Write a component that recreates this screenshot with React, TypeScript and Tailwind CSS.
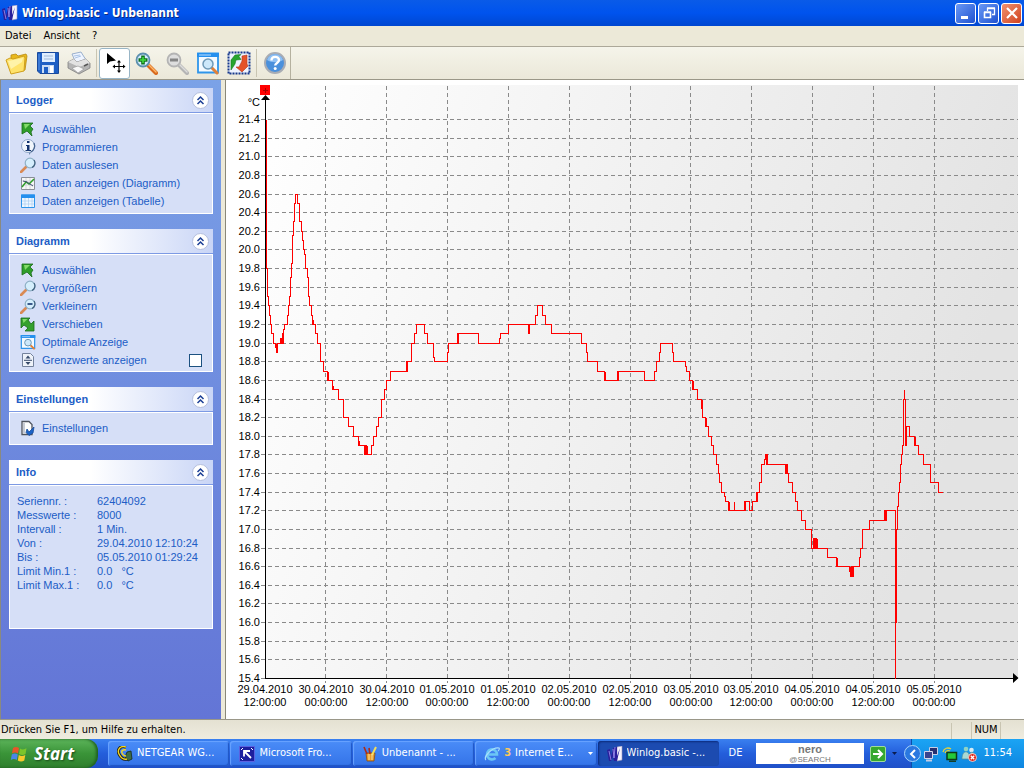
import type { ReactNode } from "react";

type IconProps = { className?: string };

/* ---------- icons ---------- */

function WinlogIcon() {
  return (
    <svg className="h-4 w-4 shrink-0" viewBox="0 0 16 16">
      <path d="M10 1l5-1v14l-5 1z" fill="#f6f4ff" stroke="#9a96b8" strokeWidth=".6" />
      <path d="M0 4l3-1 1 8 2-9 4-1v9l3-8-3 13H7l-1-5-2 5H2z" fill="#2a1f9c" />
      <path d="M2 5l2 9M6 3l1 9M8 1L7 12" stroke="#b4a8ff" strokeWidth=".7" />
    </svg>
  );
}

function FolderIcon() {
  return (
    <svg className="h-6 w-6" viewBox="0 0 24 24">
      <path d="M6 4l5-1 2 2 8-2 1 2-2 14-14 2z" fill="#e9b91c" stroke="#b98a10" strokeWidth=".8" />
      <path d="M1 9l4-2 3 1 11-3 1 2-1 13-13 3z" fill="#ffe36a" stroke="#cf9f1c" />
      <path d="M3 10l5-1 10-2-1 4L6 18z" fill="#fff6b8" opacity=".8" />
    </svg>
  );
}

function SaveIcon() {
  return (
    <svg className="h-6 w-6" viewBox="0 0 24 24">
      <path d="M1.500 1.500h21v21H4l-2.500-2.500z" fill="#1e5fc4" stroke="#1a4a9c" />
      <path d="M6 2h13v9H6z" fill="#dfeeff" />
      <path d="M8 5h9M8 8h9" stroke="#9fb8d8" />
      <path d="M6 14h12v8H6z" fill="#c9dcf5" />
      <path d="M8 16h4v6H8z" fill="#1e5fc4" />
      <path d="M14 15h3v7h-3z" fill="#fff" />
      <path d="M3 3v16" stroke="#5a96e8" />
    </svg>
  );
}

function PrinterIcon() {
  return (
    <svg className="h-6 w-6" viewBox="0 0 24 24">
      <path d="M5 3l9-2 5 8-10 3z" fill="#eef4ff" stroke="#9bb0cc" />
      <path d="M7 5l6-1M8 7l6-2" stroke="#a9c3e6" />
      <path d="M1 11l6-3 3 3 9-3 4 4v5l-11 6-11-6z" fill="#b4b4b4" stroke="#808080" strokeWidth=".8" />
      <path d="M1 11l11 5 11-4-4-4-9 3-3-3z" fill="#e2e2e2" />
      <path d="M5 17l6-2 6 3-6 4z" fill="#f8f8f8" stroke="#9a9a9a" strokeWidth=".7" />
      <path d="M17 15l4-2" stroke="#555" strokeWidth="1.500" />
    </svg>
  );
}

function CursorMoveIcon() {
  return (
    <svg className="h-6 w-6" viewBox="0 0 24 24">
      <path d="M4 2v11l3-2.500 6-1z" fill="#000" />
      <path d="M16 10v11M10.500 15.500h11" stroke="#000" strokeWidth="1.200" />
      <path d="M16 9l-2 2.500h4zM16 22l-2-2.500h4zM9.500 15.500l2.500-2v4zM22.500 15.500l-2.500-2v4z" fill="#000" />
    </svg>
  );
}

function ZoomIcon({ sign, muted }: { sign: "plus" | "minus"; muted?: boolean }) {
  return (
    <svg className="h-6 w-6" viewBox="0 0 24 24">
      <path d="M14 14l8 8" stroke={muted ? "#b4b4b4" : "#d86a1e"} strokeWidth="4" strokeLinecap="round" />
      <path d="M14 13l8 8" stroke={muted ? "#dcdcdc" : "#ffb868"} strokeWidth="1.500" strokeLinecap="round" />
      <circle cx="9" cy="9" r="6.500" fill={muted ? "#dedede" : "#d3ebff"} stroke={muted ? "#b4b4b4" : "#5c8fae"} strokeWidth="1.800" />
      {sign === "plus" ? (
        <path d="M9 4.500v9M4.500 9h9" stroke="#10731a" strokeWidth="3.600" />
      ) : (
        <path d="M5 9h8" stroke="#858585" strokeWidth="3" />
      )}
      {sign === "plus" && <path d="M9 6v6M6 9h6" stroke="#3fdb3f" strokeWidth="1.600" />}
    </svg>
  );
}

function ZoomWindowIcon({ className = "h-6 w-6" }: IconProps) {
  return (
    <svg className={className} viewBox="0 0 24 24">
      <path d="M2 2.500h20v19H2z" fill="#f4faff" stroke="#2f95ea" strokeWidth="1.800" />
      <path d="M1 2h22v4H1z" fill="#2590ee" />
      <path d="M3 4h12" stroke="#bfe0ff" />
      <path d="M16 17l5 5" stroke="#e0803a" strokeWidth="3" strokeLinecap="round" />
      <circle cx="12" cy="13" r="5" fill="#cde8fa" stroke="#6f9ab8" strokeWidth="1.500" />
    </svg>
  );
}

function OptimizeIcon() {
  return (
    <svg className="h-6 w-6" viewBox="0 0 24 24">
      <path d="M1.500 1.500h21v21h-21z" fill="#eef3ff" stroke="#17388c" strokeWidth="2" strokeDasharray="2 1" />
      <path d="M4 19V9l4-5 6-.5-2 2 2 3-5 .5-1 4z" fill="#27a52e" stroke="#167a1c" strokeWidth=".6" />
      <path d="M15 5l5-1v9l1 2-6 6-6-5h3l3-6z" fill="#e5532a" stroke="#b6381a" strokeWidth=".6" />
    </svg>
  );
}

function HelpIcon() {
  return (
    <svg className="h-6 w-6" viewBox="0 0 24 24">
      <circle cx="12" cy="12" r="10" fill="#4a90dc" stroke="#a8acb4" strokeWidth="2" />
      <path d="M4 9a8.500 8.500 0 0116 0c-5 3-11 3-16 0z" fill="#8fc0f4" />
      <path d="M8.500 9.500c0-5 7.500-4.500 7.500-.5 0 3-3.800 2.800-3.800 5.500" fill="none" stroke="#fff" strokeWidth="2.400" />
      <circle cx="12.200" cy="17.600" r="1.500" fill="#fff" />
    </svg>
  );
}

function ArrowIcon() {
  return (
    <svg className="h-4 w-4" viewBox="0 0 16 16">
      <path d="M2 2h11l-3 3 3 3-2 3 1 4-5-5-5 3z" fill="#2f9e2a" stroke="#1b6b1a" strokeWidth=".8" />
      <path d="M4 3h6L5 8z" fill="#84dc6a" />
    </svg>
  );
}

function InfoIcon() {
  return (
    <svg className="h-4 w-4" viewBox="0 0 16 16">
      <path d="M9 12l4-1-4 5z" fill="#6c88ab" />
      <circle cx="8" cy="7" r="6.500" fill="#f1f6fc" stroke="#8fa6c6" />
      <path d="M14 4a7 7 0 01-3 9" fill="none" stroke="#47658f" strokeWidth="1.300" />
      <path d="M7 2h2.500v2H7zM6 6h3.500v5H11v1H5.500v-1H7V7H6z" fill="#14346e" />
    </svg>
  );
}

function LensIcon({ minus }: { minus?: boolean }) {
  return (
    <svg className="h-4 w-4" viewBox="0 0 16 16">
      <path d="M6 10l-5 5" stroke="#d98a55" strokeWidth="2.600" strokeLinecap="round" />
      <circle cx="10" cy="6" r="4.800" fill="#d5eefc" stroke="#8fb0c6" strokeWidth="1.200" />
      <path d="M14 3a5 5 0 01-2 7.500" fill="none" stroke="#3f607c" strokeWidth="1.200" />
      {minus && <path d="M7.500 6h5" stroke="#14346e" strokeWidth="1.600" />}
    </svg>
  );
}

function ChartIcon() {
  return (
    <svg className="h-4 w-4" viewBox="0 0 16 16">
      <path d="M1.500 2.500h13v12h-13z" fill="#f7f7f7" stroke="#8a8f98" />
      <path d="M2 6h12M2 10h12M6 3v11M10 3v11" stroke="#c5c9d2" strokeWidth=".7" />
      <path d="M2 12l4-5 3 2 5-5" fill="none" stroke="#2f9e2a" strokeWidth="1.500" />
      <path d="M3 6l4 1 6 4" fill="none" stroke="#3e4e70" />
    </svg>
  );
}

function TableIcon() {
  return (
    <svg className="h-4 w-4" viewBox="0 0 16 16">
      <path d="M1.500 2h13v12.500h-13z" fill="#eff7ff" stroke="#2f95ea" />
      <path d="M1 1.500h14v3.500H1z" fill="#2590ee" />
      <path d="M2 8h12M2 11h12M5 5v9M8.500 5v9M12 5v9" stroke="#a9cdf0" strokeWidth=".7" />
    </svg>
  );
}

function MoveIcon() {
  return (
    <svg className="h-4 w-4" viewBox="0 0 16 16">
      <path d="M1 2h9L8 4l3 4 3-3v10H5l3-3-4-3-3 3z" fill="#35a12e" stroke="#1b6b1a" strokeWidth=".8" />
      <path d="M2.500 3h5l-4 4z" fill="#84dc6a" />
    </svg>
  );
}

function LimitsIcon() {
  return (
    <svg className="h-4 w-4" viewBox="0 0 16 16">
      <path d="M2.500 1.500h8l3 3v10h-11z" fill="#eef2f9" stroke="#74829c" />
      <path d="M8 3.500l2.500 3h-5zM8 13l2.500-3h-5z" fill="#364969" />
      <path d="M4 8.300h8" stroke="#364969" />
    </svg>
  );
}

function SettingsIcon() {
  return (
    <svg className="h-4 w-4" viewBox="0 0 16 16">
      <path d="M2 1.500h7l3 3v10H2z" fill="#fdfdfd" stroke="#50555f" strokeWidth="1.300" />
      <path d="M4 3v10" stroke="#b4bac6" strokeWidth="1.500" />
      <path d="M7 9l2 3 5-5-1 6-4 2.500-3-3z" fill="#1c63c8" stroke="#184a98" strokeWidth=".8" />
    </svg>
  );
}

function WindowsFlag() {
  return (
    <svg className="h-5 w-5" viewBox="0 0 20 20">
      <path d="M3 4c2-1.500 4-1.500 6 0L8 9.500C6 8 4 8 2 9.500z" fill="#e8552a" />
      <path d="M10 4.500c2 1.200 4 1.200 6.500-.2L15.500 10c-2 1.300-4 1.300-6.500 0z" fill="#7cc52b" />
      <path d="M1.800 10.500c2-1.500 4-1.500 6 0l-1 5.500c-2-1.500-4-1.500-6 0z" fill="#4a86e8" />
      <path d="M8.800 11c2 1.200 4 1.200 6.500 0l-1 5.500c-2 1.300-4.500 1.300-6.500 0z" fill="#f8c92c" />
    </svg>
  );
}

function NetgearIcon() {
  return (
    <svg className="h-4 w-4 shrink-0" viewBox="0 0 16 16">
      <path d="M10 6l4-1 1 8-4 2-3-4z" fill="#3d6b45" stroke="#142a18" strokeWidth=".8" />
      <path d="M9 1C3-1 0 4 2 8s5 6 8 5" fill="none" stroke="#1d1d10" strokeWidth="3" />
      <path d="M9 1C3-1 0 4 2 8s5 6 8 5M9 4C6 3 4 5 5 7s3 3 4 3" fill="none" stroke="#f3d523" strokeWidth="1.400" />
    </svg>
  );
}

function FrontpageIcon() {
  return (
    <svg className="h-4 w-4 shrink-0" viewBox="0 0 16 16">
      <path d="M.5.5h15v15H.5z" fill="#1c1f9e" stroke="#5a60e0" />
      <path d="M5 5l7 7M5 10.500V5h6" fill="none" stroke="#fff" strokeWidth="1.800" />
      <path d="M2 12l2 2M12 2l2 2M2 4l2-2" stroke="#fff" />
    </svg>
  );
}

function PaintIcon() {
  return (
    <svg className="h-4 w-4 shrink-0" viewBox="0 0 16 16">
      <path d="M4 7h9l-1 8H5z" fill="#e89a2a" stroke="#8a4c10" strokeWidth=".8" />
      <path d="M5 8L2 1M8 8L7 2" stroke="#b02a14" strokeWidth="1.600" />
      <path d="M10 9l4-8" stroke="#f4de5a" strokeWidth="2" />
      <path d="M7 8v6M10 8v6" stroke="#f8e39a" />
    </svg>
  );
}

function ExplorerIcon() {
  return (
    <svg className="h-4 w-4 shrink-0" viewBox="0 0 16 16">
      <path d="M3.500 8.500H13A5 5 0 1011.500 12" fill="none" stroke="#6cc7f5" strokeWidth="2.600" />
      <path d="M2 14C-1 11 8 1 15 2c.8.600 0 2-1 3" fill="none" stroke="#a9dffc" strokeWidth="1.100" />
    </svg>
  );
}

function MonitorsIcon() {
  return (
    <svg className="h-4 w-4" viewBox="0 0 16 16">
      <path d="M6.500 1.500h8v7h-8z" fill="#26306e" stroke="#c6cde4" />
      <path d="M1.500 5.500h8v7h-8z" fill="#39458e" stroke="#d5daea" />
      <path d="M3 14.500h6" stroke="#c6cde4" strokeWidth="2" />
    </svg>
  );
}

function WirelessIcon() {
  return (
    <svg className="h-4 w-4" viewBox="0 0 16 16">
      <path d="M1 6c1-4 5-5 8-3M3 7c1-2 3-3 5-2" fill="none" stroke="#e8d23a" strokeWidth="1.300" />
      <path d="M5 6.500h9.500v7H5z" fill="#24c93a" stroke="#0c3b18" strokeWidth="1.500" />
      <path d="M7 15.200h7" stroke="#173c1e" strokeWidth="1.500" />
    </svg>
  );
}

function MessengerIcon() {
  return (
    <svg className="h-4 w-4" viewBox="0 0 16 16">
      <circle cx="5" cy="3" r="2.300" fill="#8fd3c4" />
      <circle cx="10.500" cy="4" r="2.300" fill="#d8ecf5" />
      <path d="M1 13c0-10 8-9 8 0zM8 12c0-8 6-7 6-1z" fill="#a9d9d4" stroke="#4c8c9a" strokeWidth=".7" />
      <circle cx="11.500" cy="11.500" r="4" fill="#e02a1c" stroke="#fff" strokeWidth=".7" />
      <path d="M9.800 9.800l3.400 3.400M13.200 9.800l-3.400 3.400" stroke="#fff" strokeWidth="1.300" />
    </svg>
  );
}

/* ---------- window chrome ---------- */

function TitleBar() {
  const button = "flex h-[21px] w-[21px] items-center justify-center rounded-[3px] border border-white";
  return (
    <header className="flex h-[26px] items-center gap-1 bg-linear-to-b from-[#0a5be8] via-[#0053ee] to-[#0047d0] px-0.5">
      <WinlogIcon />
      <h1 className="flex-1 font-['DejaVu_Sans_Condensed','Liberation_Sans',sans-serif] text-[12px] font-bold text-white [text-shadow:1px_1px_#0a2a80]">
        Winlog.basic - Unbenannt
      </h1>
      <div className="flex gap-0.5">
        <button aria-label="Minimieren" className={`${button} bg-linear-to-br from-[#6a98f5] to-[#1f50d0]`}>
          <svg className="h-4 w-4" viewBox="0 0 16 16"><path d="M3 11h7v3H3z" fill="#fff" /></svg>
        </button>
        <button aria-label="Wiederherstellen" className={`${button} bg-linear-to-br from-[#6a98f5] to-[#1f50d0]`}>
          <svg className="h-4 w-4" viewBox="0 0 16 16">
            <path d="M6.500 6V3.500h7v6H11M6 3h8" fill="none" stroke="#fff" strokeWidth="1.300" />
            <path d="M3.500 7.500h6v5h-6zM3 7h7" fill="none" stroke="#fff" strokeWidth="1.600" />
          </svg>
        </button>
        <button aria-label="Schließen" className={`${button} bg-linear-to-br from-[#f0906e] to-[#d0401a]`}>
          <svg className="h-4 w-4" viewBox="0 0 16 16"><path d="M3 3l10 10M13 3L3 13" stroke="#fff" strokeWidth="2.200" /></svg>
        </button>
      </div>
    </header>
  );
}

function ToolButton({ label, active, children }: { label: string; active?: boolean; children: ReactNode }) {
  return (
    <button
      aria-label={label}
      className={`flex h-[31px] w-[31px] items-center justify-center ${active ? "rounded-[3px] border border-[#98b5c6] bg-white" : ""}`}
    >
      {children}
    </button>
  );
}

function Separator() {
  return <div className="mx-0.5 h-7 w-px bg-[#c9c5b2]" />;
}

function Toolbar() {
  return (
    <div className="flex h-[34px] items-center border-t border-b border-t-[#aca899] border-b-[#9a9788] bg-linear-to-b from-[#f5f4ea] to-[#ebe8d9] pl-px">
      <ToolButton label="Öffnen"><FolderIcon /></ToolButton>
      <ToolButton label="Speichern"><SaveIcon /></ToolButton>
      <ToolButton label="Drucken"><PrinterIcon /></ToolButton>
      <Separator />
      <ToolButton label="Auswählen" active><CursorMoveIcon /></ToolButton>
      <ToolButton label="Vergrößern"><ZoomIcon sign="plus" /></ToolButton>
      <ToolButton label="Verkleinern"><ZoomIcon sign="minus" muted /></ToolButton>
      <ToolButton label="Ausschnitt"><ZoomWindowIcon /></ToolButton>
      <ToolButton label="Optimale Anzeige"><OptimizeIcon /></ToolButton>
      <Separator />
      <ToolButton label="Hilfe"><HelpIcon /></ToolButton>
      <div className="h-8 w-px bg-[#b5b19f]" />
    </div>
  );
}

/* ---------- task pane ---------- */

function Panel({ title, bodyClass = "", children }: { title: string; bodyClass?: string; children: ReactNode }) {
  return (
    <section>
      <div className="flex h-[25px] items-center justify-between border-b border-[#7d9ae4] bg-linear-to-r from-white from-40% to-[#c9d5f6] pr-1 pl-[7px]">
        <h2 className="text-[11px] font-bold text-[#215dc6]">{title}</h2>
        <button
          aria-label={`${title} einklappen`}
          className="flex h-[17px] w-[17px] items-center justify-center rounded-full border border-[#b5bfdd] bg-white"
        >
          <svg className="h-[11px] w-[11px]" viewBox="0 0 11 11">
            <path d="M2.500 5l3-3 3 3M2.500 9l3-3 3 3" fill="none" stroke="#1c3f95" strokeWidth="1.500" />
          </svg>
        </button>
      </div>
      <div className={`border border-white bg-[#d6dff7] ${bodyClass}`}>{children}</div>
    </section>
  );
}

function TaskItem({ icon, children }: { icon: ReactNode; children: ReactNode }) {
  return (
    <li>
      <button className="flex h-[18px] w-full items-center gap-1.5 pl-[10px] text-left">
        {icon}
        {children}
      </button>
    </li>
  );
}

const INFO = [
  ["Seriennr. :", "62404092"],
  ["Messwerte :", "8000"],
  ["Intervall :", "1 Min."],
  ["Von :", "29.04.2010 12:10:24"],
  ["Bis :", "05.05.2010 01:29:24"],
  ["Limit Min.1 :", "0.0\u00a0\u00a0\u00a0°C"],
  ["Limit Max.1 :", "0.0\u00a0\u00a0\u00a0°C"],
];

function Sidebar() {
  return (
    <aside className="flex w-[221px] shrink-0 flex-col gap-[15px] border-l border-[#8a8a80] bg-linear-to-b from-[#7ba2e7] to-[#6375d6] px-2 pt-2 font-['Liberation_Sans',Arial,sans-serif] text-[11px] text-[#215dc6]">
      <Panel title="Logger" bodyClass="pt-1.5 pb-[3px]">
        <ul>
          <TaskItem icon={<ArrowIcon />}>Auswählen</TaskItem>
          <TaskItem icon={<InfoIcon />}>Programmieren</TaskItem>
          <TaskItem icon={<LensIcon />}>Daten auslesen</TaskItem>
          <TaskItem icon={<ChartIcon />}>Daten anzeigen (Diagramm)</TaskItem>
          <TaskItem icon={<TableIcon />}>Daten anzeigen (Tabelle)</TaskItem>
        </ul>
      </Panel>
      <Panel title="Diagramm" bodyClass="pt-1.5 pb-0.5">
        <ul>
          <TaskItem icon={<ArrowIcon />}>Auswählen</TaskItem>
          <TaskItem icon={<LensIcon />}>Vergrößern</TaskItem>
          <TaskItem icon={<LensIcon minus />}>Verkleinern</TaskItem>
          <TaskItem icon={<MoveIcon />}>Verschieben</TaskItem>
          <TaskItem icon={<ZoomWindowIcon className="h-4 w-4" />}>Optimale Anzeige</TaskItem>
          <li className="flex h-[18px] items-center gap-1.5 pr-[10px] pl-[10px]">
            <LimitsIcon />
            <label className="flex-1" htmlFor="limits">Grenzwerte anzeigen</label>
            <input className="h-[13px] w-[13px] appearance-none border border-[#1c5180] bg-white" id="limits" type="checkbox" />
          </li>
        </ul>
      </Panel>
      <Panel title="Einstellungen" bodyClass="pt-1.5 pb-[7px]">
        <ul>
          <TaskItem icon={<SettingsIcon />}>Einstellungen</TaskItem>
        </ul>
      </Panel>
      <Panel title="Info" bodyClass="min-h-36 pt-2 pl-[7px]">
        <dl className="grid grid-cols-[80px_1fr] leading-[14px]">
          {INFO.map(([label, value]) => (
            <div className="contents" key={label}>
              <dt>{label}</dt>
              <dd>{value}</dd>
            </div>
          ))}
        </dl>
      </Panel>
    </aside>
  );
}

/* ---------- chart ---------- */

const LEFT = 39;
const RIGHT = 792;
const TOP = 5;
const BOTTOM = 598;
const MAX_TEMP = 21.4;
const MIN_TEMP = 15.4;

const X_LABELS = [
  "29.04.2010 12:00:00",
  "30.04.2010 00:00:00",
  "30.04.2010 12:00:00",
  "01.05.2010 00:00:00",
  "01.05.2010 12:00:00",
  "02.05.2010 00:00:00",
  "02.05.2010 12:00:00",
  "03.05.2010 00:00:00",
  "03.05.2010 12:00:00",
  "04.05.2010 00:00:00",
  "04.05.2010 12:00:00",
  "05.05.2010 00:00:00",
];

// [x, temperature], the value holds until the next entry
const SERIES: [number, number][] = [
  [40, 21.4], [40, 19.8], [41, 19.5], [42, 19.4], [43, 19.3], [44, 19.2], [45, 19.1], [47, 19.0], [49, 18.95],
  [50, 19.0], [50, 18.9], [51, 19.0], [54, 19.05], [55, 19.0], [56, 19.1], [57, 19.0], [57, 19.15], [58, 19.2],
  [61, 19.3], [62, 19.4], [63, 19.5], [64, 19.7], [65, 19.85], [66, 20.15], [67, 20.3], [68, 20.5], [69, 20.6],
  [71, 20.5], [73, 20.3], [75, 20.2], [76, 20.1], [77, 20.0], [78, 19.95], [79, 19.8], [81, 19.7], [82, 19.5],
  [83, 19.4], [85, 19.3], [86, 19.2], [87, 19.25], [87, 19.2], [89, 19.1], [91, 19.0], [94, 18.8], [97, 18.7],
  [101, 18.6], [102, 18.7], [102, 18.6], [106, 18.5], [107, 18.55], [107, 18.5], [112, 18.4], [117, 18.2],
  [122, 18.1], [127, 18.0], [132, 17.9], [133, 17.95], [133, 17.9], [138, 17.8], [139, 17.9], [140, 17.8],
  [141, 17.9], [141, 17.8], [145, 17.9], [147, 18.0], [150, 18.1], [152, 18.2], [155, 18.4], [158, 18.5],
  [160, 18.6], [164, 18.7], [180, 18.8], [181, 18.7], [181, 18.8], [185, 19.0], [188, 19.1], [190, 19.2],
  [198, 19.1], [201, 19.0], [207, 18.85], [208, 18.8], [221, 18.9], [222, 19.0], [231, 19.1], [232, 19.0],
  [232, 19.1], [252, 19.0], [273, 19.05], [274, 19.1], [282, 19.2], [302, 19.1], [303, 19.2], [309, 19.3],
  [311, 19.4], [316, 19.3], [319, 19.2], [325, 19.1], [355, 19.0], [360, 18.9], [361, 18.8], [371, 18.7],
  [378, 18.6], [379, 18.7], [379, 18.6], [391, 18.7], [392, 18.6], [392, 18.7], [418, 18.6], [428, 18.7],
  [430, 18.8], [433, 18.9], [434, 19.0], [446, 18.9], [447, 18.8], [459, 18.75], [460, 18.7], [463, 18.6],
  [466, 18.5], [467, 18.6], [467, 18.5], [471, 18.4], [475, 18.3], [476, 18.4], [476, 18.2], [479, 18.1],
  [480, 18.2], [480, 18.1], [482, 18.0], [485, 17.9], [487, 17.8], [490, 17.7], [492, 17.6], [493, 17.5],
  [495, 17.4], [498, 17.35], [499, 17.3], [502, 17.2], [503, 17.3], [503, 17.2], [508, 17.3], [508, 17.2],
  [518, 17.3], [519, 17.2], [519, 17.3], [523, 17.2], [526, 17.3], [530, 17.4], [531, 17.3], [531, 17.4],
  [533, 17.5], [535, 17.7], [538, 17.75], [539, 17.8], [540, 17.7], [540, 17.8], [541, 17.7], [559, 17.6],
  [560, 17.7], [561, 17.6], [562, 17.5], [566, 17.4], [569, 17.3], [571, 17.2], [575, 17.1], [579, 17.0],
  [585, 16.8], [587, 16.9], [588, 16.8], [589, 16.9], [590, 16.8], [591, 16.9], [591, 16.8], [601, 16.7],
  [610, 16.6], [611, 16.7], [611, 16.6], [623, 16.55], [624, 16.6], [624, 16.5], [625, 16.6], [626, 16.5],
  [627, 16.6], [633, 16.7], [634, 16.8], [636, 17.0], [643, 17.1], [658, 17.2], [659, 17.1], [660, 17.2],
  [669, 15.4], [669, 16.0], [670, 17.0], [671, 17.25], [672, 17.4], [673, 17.5], [674, 17.7], [675, 17.8],
  [676, 17.9], [677, 18.4], [678, 18.5], [678, 18.4], [679, 17.9], [680, 18.1], [683, 18.0], [688, 17.9],
  [689, 18.0], [689, 17.9], [692, 17.8], [697, 17.7], [704, 17.5], [712, 17.4], [716, 17.4],
];

function yOf(temp: number) {
  return Math.round(39 + ((MAX_TEMP - temp) / (MAX_TEMP - MIN_TEMP)) * (BOTTOM - 39)) + 0.5;
}

function TemperatureChart() {
  const ticks = Array.from({ length: 31 }, (_, i) => MAX_TEMP - i * 0.2);
  const path = SERIES.map(([x, temp], i) => (i === 0 ? `M${x + 0.5} ${yOf(temp)}` : `H${x + 0.5}V${yOf(temp)}`)).join("");

  return (
    <svg
      aria-label="Temperaturverlauf"
      className="block h-auto w-full font-['Liberation_Sans',Arial,sans-serif] text-[11px]"
      role="img"
      viewBox="0 0 798 639"
    >
      <defs>
        <linearGradient id="plot" x1="0" x2="1" y1="0" y2="0.25">
          <stop offset="0" stopColor="#ffffff" />
          <stop offset="1" stopColor="#e3e3e3" />
        </linearGradient>
      </defs>
      <rect fill="url(#plot)" height={BOTTOM - TOP} width={RIGHT - LEFT} x={LEFT} y={TOP} />

      <g shapeRendering="crispEdges" stroke="#8a8a8a" strokeDasharray="4 3">
        {ticks.map((temp) => (
          <line key={temp} x1={LEFT - 4} x2={RIGHT} y1={yOf(temp)} y2={yOf(temp)} />
        ))}
        {X_LABELS.slice(1).map((label, i) => {
          const x = Math.round(99 + i * 60.9) + 0.5;
          return <line key={label} x1={x} x2={x} y1={TOP + 1} y2={BOTTOM + 5} />;
        })}
      </g>

      <g textAnchor="end">
        {ticks.map((temp) => (
          <text key={temp} x={LEFT - 5} y={yOf(temp) + 3.5}>{temp.toFixed(1)}</text>
        ))}
        <text x={LEFT - 5} y="26">°C</text>
      </g>
      <g textAnchor="middle">
        {X_LABELS.map((label, i) => {
          const [date, time] = label.split(" ");
          const x = Math.round(39 + i * 60.8);
          return (
            <text key={label}>
              <tspan x={x} y="613">{date}</tspan>
              <tspan x={x} y="626">{time}</tspan>
            </text>
          );
        })}
      </g>

      <path d={`M${LEFT + 0.5} 18V${BOTTOM + 0.5}H788`} fill="none" shapeRendering="crispEdges" stroke="#000" />
      <path d="M39.500 15l4.500 5h-9zM792.500 598l-5.500-5v10z" fill="#000" />
      <rect fill="#f00" height="10" width="10" x="34" y="5" />
      <path d="M37 10.500h5M39.500 8v5" stroke="#a00" />
      <path d={path} fill="none" shapeRendering="crispEdges" stroke="#f00" />
    </svg>
  );
}

/* ---------- bottom bars ---------- */

function StatusBar() {
  return (
    <footer className="flex h-5 items-center border-t border-[#9a9788] bg-linear-to-b from-[#e4e1d2] to-[#efecdf] px-px pt-0.5 text-[11px]">
      <span className="flex-1">Drücken Sie F1, um Hilfe zu erhalten.</span>
      <span className="h-4 w-5 border-l border-[#c9c5b2]" />
      <span className="w-[30px] border-x border-[#c9c5b2] text-center">NUM</span>
      <span className="w-[22px]" />
    </footer>
  );
}

function Task({ icon, active, children }: { icon: ReactNode; active?: boolean; children: ReactNode }) {
  return (
    <button
      className={`flex h-[25px] min-w-0 items-center gap-1 rounded-[3px] pr-1 pl-[9px] text-left text-white ${
        active
          ? "bg-[#1c4bb0] shadow-[inset_1px_1px_2px_#0c2c7c]"
          : "bg-linear-to-b from-[#4a8cf8] to-[#3473e8] shadow-[inset_1px_1px_1px_#6aa4ff,inset_-1px_-1px_1px_#1f55c4]"
      }`}
    >
      {icon}
      {children}
    </button>
  );
}

function Taskbar() {
  return (
    <nav className="flex h-[29px] items-center bg-linear-to-b from-[#3a80f0] via-[#245edb] to-[#1f50c8] text-[11px]">
      <button className="flex h-full w-[98px] shrink-0 items-center gap-1 rounded-r-xl bg-linear-to-b from-[#5cb45a] via-[#3a9438] to-[#2f7f2d] pl-2.5 font-['Open_Sans','Liberation_Sans',sans-serif] text-[17px] font-bold text-white italic shadow-[inset_-2px_0_3px_#1f5f1f] [text-shadow:1px_1px_2px_#1a4a1a]">
        <WindowsFlag />
        Start
      </button>
      <div className="ml-[10px] grid min-w-0 flex-1 grid-cols-5 gap-px">
        <Task icon={<NetgearIcon />}><span className="truncate">NETGEAR WG...</span></Task>
        <Task icon={<FrontpageIcon />}><span className="truncate">Microsoft Fro...</span></Task>
        <Task icon={<PaintIcon />}><span className="truncate">Unbenannt - ...</span></Task>
        <Task icon={<ExplorerIcon />}>
          <span className="font-bold text-[#ffc95a]">3</span>
          <span className="flex-1 truncate">Internet E...</span>
          <svg className="h-[3px] w-[5px] shrink-0" viewBox="0 0 5 3"><path d="M0 0h5L2.500 3z" fill="#fff" /></svg>
        </Task>
        <Task active icon={<WinlogIcon />}><span className="truncate">Winlog.basic -...</span></Task>
      </div>
      <div className="flex shrink-0 items-center">
        <button className="w-[37px] pr-1 text-center text-white">DE</button>
        <div className="relative h-[21px] w-[108px]">
          <input aria-label="Nero Search" className="h-full w-full bg-white px-1" type="text" />
          <span className="pointer-events-none absolute inset-0 flex flex-col items-center font-['Liberation_Sans',Arial,sans-serif] text-[#777]">
            <b className="text-[11px] leading-[12px]">nero</b>
            <span className="text-[8px] leading-[9px]">@SEARCH</span>
          </span>
        </div>
        <button aria-label="Suchen" className="ml-1.5 flex h-4 w-4 items-center justify-center rounded-[2px] border border-[#9fdc9a] bg-[#35a82f]">
          <svg className="h-3 w-3" viewBox="0 0 12 12"><path d="M1 6h8M6 2l4 4-4 4" fill="none" stroke="#fff" strokeWidth="2" /></svg>
        </button>
        <button aria-label="Suchoptionen" className="flex w-[17px] justify-center">
          <svg className="h-[3px] w-[5px]" viewBox="0 0 5 3"><path d="M0 0h5L2.500 3z" fill="#0a1c50" /></svg>
        </button>
      </div>
      <div className="ml-2 flex h-[29px] w-[113px] shrink-0 items-center border-l border-[#0c4fa8] bg-linear-to-b from-[#1ba4f4] to-[#0f86e0] text-white">
        <button
          aria-label="Inaktive Symbole einblenden"
          className="-ml-2 flex h-[17px] w-[17px] items-center justify-center rounded-full border border-[#a9d4fa] bg-[#2a78e0]"
        >
          <svg className="h-2.5 w-2.5" viewBox="0 0 10 10"><path d="M7 1L3 5l4 4" fill="none" stroke="#fff" strokeWidth="2" /></svg>
        </button>
        <div className="flex flex-1 items-center gap-[3px] pl-0.5">
          <MonitorsIcon />
          <WirelessIcon />
          <MessengerIcon />
        </div>
        <time className="pr-3">11:54</time>
      </div>
    </nav>
  );
}

export default function App() {
  return (
    <div className="flex min-h-screen flex-col bg-[#ece9d8] font-['DejaVu_Sans_Condensed','Liberation_Sans',sans-serif] text-black">
      <TitleBar />
      <nav className="flex h-5 items-center gap-3 px-[5px] text-[11px]">
        <button>Datei</button>
        <button>Ansicht</button>
        <button>?</button>
      </nav>
      <Toolbar />
      <main className="flex flex-1">
        <Sidebar />
        <div className="ml-1 min-w-0 flex-1 border-l border-[#8a8877] bg-white">
          <TemperatureChart />
        </div>
      </main>
      <StatusBar />
      <Taskbar />
    </div>
  );
}
